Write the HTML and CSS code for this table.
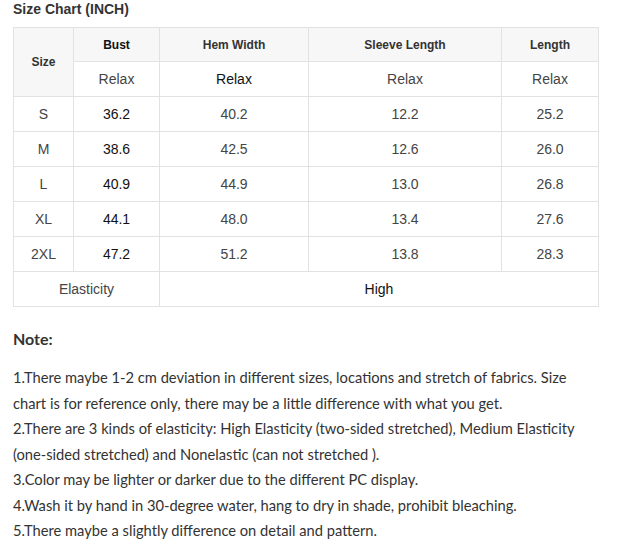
FILE: index.html
```html
<!DOCTYPE html>
<html>
<head>
<meta charset="utf-8">
<link rel="stylesheet" href="styles.css">
</head>
<body>
<div class="page">
  <h3 class="title">Size Chart (INCH)</h3>
  <table class="chart">
    <colgroup>
      <col style="width:60px">
      <col style="width:86px">
      <col style="width:149px">
      <col style="width:193px">
      <col style="width:97px">
    </colgroup>
    <tr class="head">
      <th rowspan="2" class="size-h">Size</th>
      <th class="dark">Bust</th>
      <th>Hem Width</th>
      <th>Sleeve Length</th>
      <th>Length</th>
    </tr>
    <tr>
      <td>Relax</td>
      <td class="dark">Relax</td>
      <td>Relax</td>
      <td>Relax</td>
    </tr>
    <tr><td>S</td><td class="dark">36.2</td><td>40.2</td><td>12.2</td><td>25.2</td></tr>
    <tr><td>M</td><td class="dark">38.6</td><td>42.5</td><td>12.6</td><td>26.0</td></tr>
    <tr><td>L</td><td class="dark">40.9</td><td>44.9</td><td>13.0</td><td>26.8</td></tr>
    <tr><td>XL</td><td class="dark">44.1</td><td>48.0</td><td>13.4</td><td>27.6</td></tr>
    <tr><td>2XL</td><td class="dark">47.2</td><td>51.2</td><td>13.8</td><td>28.3</td></tr>
    <tr><td colspan="2">Elasticity</td><td colspan="3" class="dark">High</td></tr>
  </table>
  <h4 class="note-title">Note:</h4>
  <div class="notes">
    <p>1.There maybe 1-2 cm deviation in different sizes, locations and stretch of fabrics. Size chart is for reference only, there may be a little difference with what you get.</p>
    <p>2.There are 3 kinds of elasticity: High Elasticity (two-sided stretched), Medium Elasticity (one-sided stretched) and Nonelastic (can not stretched ).</p>
    <p>3.Color may be lighter or darker due to the different PC display.</p>
    <p>4.Wash it by hand in 30-degree water, hang to dry in shade, prohibit bleaching.</p>
    <p>5.There maybe a slightly difference on detail and pattern.</p>
  </div>
</div>
</body>
</html>
```
FILE: styles.css
```css
html, body {
  margin: 0;
  padding: 0;
  background: #fff;
}
.page {
  padding: 0 13px;
  width: 585px;
}
.title {
  margin: 0;
  padding-top: 1px;
  height: 26px;
  font-family: "Liberation Sans", Arial, sans-serif;
  font-size: 14px;
  font-weight: bold;
  color: #333;
  line-height: 17px;
}
.chart {
  border-collapse: collapse;
  table-layout: fixed;
  width: 586px;
  font-family: "Liberation Sans", Arial, sans-serif;
  font-size: 14px;
  color: #444;
}
.chart th, .chart td {
  border: 1px solid #e2e2e2;
  text-align: center;
  vertical-align: middle;
  padding: 0;
  height: 34px;
}
.chart th {
  background: #f7f7f7;
  font-size: 12px;
  font-weight: bold;
  color: #333;
  height: 33px;
}
.chart th.dark {
  color: #111;
}
.chart td.dark {
  color: #111;
}
.note-title {
  margin: 22px 0 0;
  font-family: Lato, "Open Sans", sans-serif;
  font-size: 16px;
  font-weight: bold;
  color: #333;
  line-height: 20px;
}
.notes {
  margin-top: 16px;
  font-family: Lato, "Open Sans", sans-serif;
  font-size: 14.7px;
  line-height: 25.5px;
  color: #333;
  width: 580px;
}
.notes p {
  margin: 0;
}
```
